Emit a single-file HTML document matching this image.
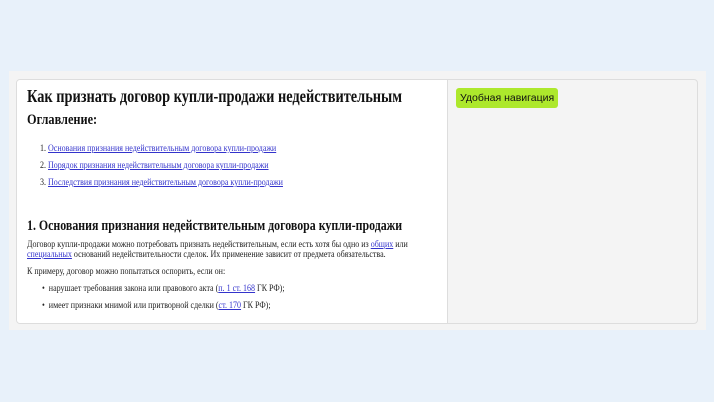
<!DOCTYPE html>
<html><head><meta charset="utf-8"><style>
body{margin:0;width:714px;height:402px;background:#e8f1fa;position:relative;overflow:hidden;font-family:"Liberation Serif",serif;color:#222}
.outer{position:absolute;left:9px;top:71px;width:697px;height:259px;background:#f4f4f4}
.inner{position:absolute;left:16px;top:79px;width:680px;height:243px;border:1px solid #ddd;border-radius:4px;background:#f4f4f4;overflow:hidden}
.left{position:absolute;left:0;top:0;width:430px;height:243px;background:#fff;border-right:1px solid #ddd;overflow:hidden}
.t{position:absolute;white-space:nowrap;transform-origin:0 0}
.h{transform:scaleX(.82)}
a{color:#3333cc;text-decoration:underline}
.badge{position:absolute;left:439px;top:8px;width:102px;height:20px;background:#ade82c;border-radius:3px;font-family:"Liberation Sans",sans-serif;font-size:10.5px;line-height:20px;padding-left:4px;box-sizing:border-box;color:#111}
.s{font-size:9px;transform:scaleX(.89)}
</style></head><body>
<div class="outer"></div>
<div class="inner">
<div class="left">
<div class="t h" style="left:10px;top:6px;font-size:17.5px;font-weight:bold;color:#111">Как признать договор купли-продажи недействительным</div>
<div class="t h" style="left:10px;top:32px;font-size:15px;font-weight:bold;color:#111">Оглавление:</div>
<div class="t s" style="left:23px;top:63px">1. <a>Основания признания недействительным договора купли-продажи</a></div>
<div class="t s" style="left:23px;top:80px">2. <a>Порядок признания недействительным договора купли-продажи</a></div>
<div class="t s" style="left:23px;top:97px">3. <a>Последствия признания недействительным договора купли-продажи</a></div>
<div class="t h" style="left:10px;top:138px;font-size:14.5px;font-weight:bold;color:#111">1. Основания признания недействительным договора купли-продажи</div>
<div class="t s" style="left:10px;top:159px">Договор купли-продажи можно потребовать признать недействительным, если есть хотя бы одно из <a>общих</a> или</div>
<div class="t s" style="left:10px;top:169px"><a>специальных</a> оснований недействительности сделок. Их применение зависит от предмета обязательства.</div>
<div class="t s" style="left:10px;top:186px">К примеру, договор можно попытаться оспорить, если он:</div>
<div class="t s" style="left:25px;top:203px">•&nbsp; нарушает требования закона или правового акта (<a>п. 1 ст. 168</a> ГК РФ);</div>
<div class="t s" style="left:25px;top:220px">•&nbsp; имеет признаки мнимой или притворной сделки (<a>ст. 170</a> ГК РФ);</div>
</div>
<div class="badge">Удобная навигация</div>
</div>
</body></html>
